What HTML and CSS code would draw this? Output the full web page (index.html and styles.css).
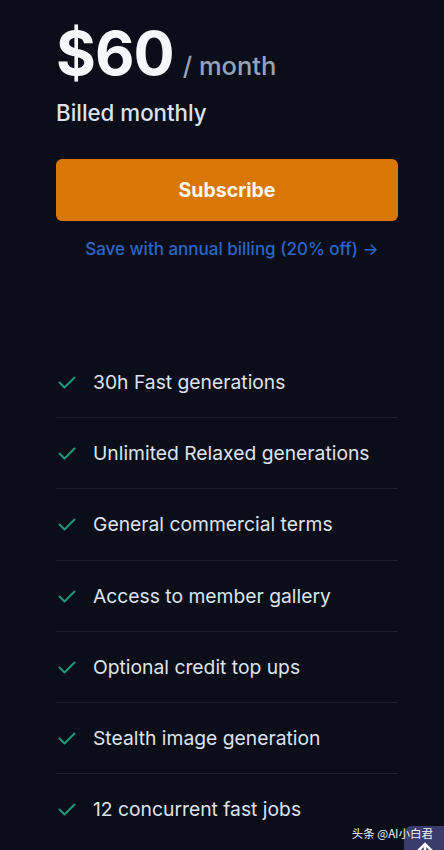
FILE: index.html
```html
<!DOCTYPE html>
<html lang="en">
<head>
<meta charset="utf-8">
<title>Pricing</title>
<link rel="stylesheet" href="styles.css">
</head>
<body>
<main class="plan">
  <div class="price-row">
    <span class="price">$60</span>
    <span class="period">/ month</span>
  </div>
  <p class="billed">Billed monthly</p>
  <button class="subscribe">Subscribe</button>
  <a class="annual" href="#">Save with annual billing (20% off) →</a>
  <ul class="features">
    <li class="feature"><svg class="check" viewBox="0 0 18 13"><path d="M1.5 6.5l5 5 10-10"/></svg><span>30h Fast generations</span></li>
    <li class="feature"><svg class="check" viewBox="0 0 18 13"><path d="M1.5 6.5l5 5 10-10"/></svg><span>Unlimited Relaxed generations</span></li>
    <li class="feature"><svg class="check" viewBox="0 0 18 13"><path d="M1.5 6.5l5 5 10-10"/></svg><span>General commercial terms</span></li>
    <li class="feature"><svg class="check" viewBox="0 0 18 13"><path d="M1.5 6.5l5 5 10-10"/></svg><span>Access to member gallery</span></li>
    <li class="feature"><svg class="check" viewBox="0 0 18 13"><path d="M1.5 6.5l5 5 10-10"/></svg><span>Optional credit top ups</span></li>
    <li class="feature"><svg class="check" viewBox="0 0 18 13"><path d="M1.5 6.5l5 5 10-10"/></svg><span>Stealth image generation</span></li>
    <li class="feature last"><svg class="check" viewBox="0 0 18 13"><path d="M1.5 6.5l5 5 10-10"/></svg><span>12 concurrent fast jobs</span></li>
  </ul>
</main>
<div class="to-top"><svg viewBox="0 0 38 24"><path d="M11 26l8-8 8 8M19 18v10"/></svg></div>
<div class="watermark">头条 @AI小白君</div>
</body>
</html>
```
FILE: styles.css
```css
html, body {
  margin: 0;
  padding: 0;
  background: #0b0e18;
  height: 850px;
  overflow: hidden;
}
body {
  font-family: Inter, "Noto Sans", sans-serif;
  color: #e2e8f0;
  position: relative;
}
.plan {
  padding: 14px 46px 0 56px;
  display: flex;
  flex-direction: column;
}
.price-row {
  display: flex;
  align-items: baseline;
  gap: 9px;
  height: 78px;
}
.price {
  font-size: 61px;
  font-weight: 700;
  color: #f5f7fb;
  letter-spacing: -1px;
  line-height: 78px;
}
.period {
  font-size: 25.5px;
  color: #94a3b8;
  font-weight: 500;
}
.billed {
  margin: 6px 0 0;
  font-size: 22.3px;
  font-weight: 500;
  color: #dbe3f0;
  line-height: 30px;
}
.subscribe {
  margin-top: 31px;
  height: 62px;
  border: 0;
  border-radius: 6px;
  background: #d97706;
  color: #fff8ee;
  font-family: inherit;
  font-size: 19.5px;
  font-weight: 700;
  cursor: pointer;
}
.annual {
  margin-top: 17px;
  padding-left: 10px;
  text-align: center;
  color: #2a66c9;
  text-decoration: none;
  font-size: 17px;
  font-weight: 500;
  line-height: 22px;
}
.features {
  list-style: none;
  margin: 87px 0 0;
  padding: 0;
}
.feature {
  display: flex;
  align-items: center;
  gap: 17px;
  height: 70.2px;
  border-bottom: 1px solid #1c2230;
  font-size: 19.3px;
  color: #dde4ef;
}
.feature.last {
  border-bottom: 0;
}
.check {
  width: 18px;
  height: 13px;
  margin-left: 2px;
  margin-top: 1px;
  fill: none;
  stroke: #1c9a78;
  stroke-width: 2;
  stroke-linecap: round;
  stroke-linejoin: round;
  flex: none;
}
.watermark {
  position: absolute;
  right: 11px;
  bottom: 9px;
  font-family: "Noto Sans CJK SC", sans-serif;
  font-size: 11.5px;
  color: #f2f2f2;
  z-index: 2;
}
.to-top {
  position: absolute;
  right: 0;
  bottom: 0;
  width: 40px;
  height: 24px;
  background: #3a3c6c;
  border-top-left-radius: 8px;
  overflow: hidden;
}
.to-top svg {
  display: block;
  width: 38px;
  height: 24px;
  margin-left: 2px;
  fill: none;
  stroke: #fff;
  stroke-width: 2.5;
}
```
